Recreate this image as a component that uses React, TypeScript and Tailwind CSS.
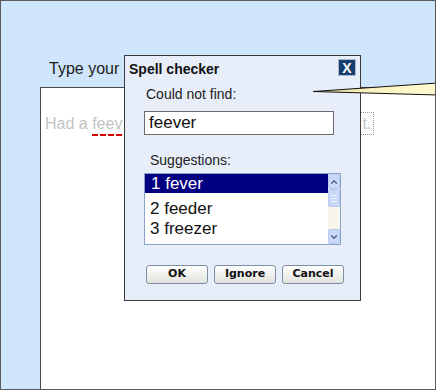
import { ChevronDown, ChevronUp } from 'lucide-react'

const sans = "font-['Liberation_Sans',Arial,sans-serif]"

export default function App() {
  return (
    <div className={`relative flex h-[390px] w-[436px] flex-col overflow-hidden border border-[#5a5a5a] bg-[#cee5fb] ${sans}`}>
      <div className="ml-[48px] mt-[58px] whitespace-nowrap text-[16px] leading-[20px] text-[#1c1c1c]">Type your</div>

      <div className="ml-[39px] mt-[8px] flex-1 border-l border-t border-[#4a4a4a] bg-white pl-[4px] pt-[24px]">
        <div className="flex items-center whitespace-nowrap text-[16px] leading-[20px] text-[#c2c2c2]">
          <span>
            Had a{' '}
            <span className="underline decoration-[#d40000] decoration-dashed decoration-[1.5px] underline-offset-[6px]">feev</span>
          </span>
          <span className="ml-[238px] inline-block h-[23px] border border-dotted border-[#9a9a9a] pl-[1px] pr-[2px] leading-[21px]">t.</span>
        </div>
      </div>

      <SpellDialog />

      <svg className="pointer-events-none absolute left-0 top-0" width="436" height="390">
        <defs>
          <linearGradient id="callout" x1="0" x2="1" y1="0" y2="0">
            <stop offset="0" stopColor="#d9cf8e" />
            <stop offset="0.45" stopColor="#fbf3bf" />
            <stop offset="1" stopColor="#fffad2" />
          </linearGradient>
        </defs>
        <polygon points="312,90.5 437,82 437,94" fill="url(#callout)" stroke="#111" strokeWidth="1" />
      </svg>
    </div>
  )
}

function SpellDialog() {
  return (
    <div className="absolute left-[123px] top-[54px] flex h-[246px] w-[237px] flex-col border border-[#3a3a3a] bg-[#e8eef9]">
      <div className="flex justify-between">
        <div className="ml-[4px] mt-[5px] text-[14px] font-bold leading-[17px] text-[#111]">Spell checker</div>
        <div className="mr-[4px] mt-[3px] flex h-[17px] w-[18px] items-center justify-center border border-[#a9bcd2] bg-[#173f6e] text-[14px] font-bold leading-none text-white">
          X
        </div>
      </div>

      <div className="ml-[21px] mt-[8px] text-[14px] leading-[16px] text-[#222]">Could not find:</div>

      <div className="ml-[19px] mt-[9px] h-[24px] w-[190px] border border-[#6b6b6b] bg-white pl-[4px] text-[17px] leading-[22px] text-[#111]">
        feever
      </div>

      <div className="ml-[25px] mt-[17px] text-[14px] leading-[16px] text-[#222]">Suggestions:</div>

      <div className="ml-[19px] mt-[5px] flex h-[72px] w-[197px] border border-[#8aa4c8] bg-white">
        <div className="flex-1 text-[17px] text-[#111]">
          <div className="h-[19px] bg-[#000080] pl-[6px] leading-[19px] text-white">1 fever</div>
          <div className="mt-[6px] h-[20px] pl-[5px] leading-[19px]">2 feeder</div>
          <div className="h-[20px] pl-[5px] leading-[19px]">3 freezer</div>
        </div>
        <Scrollbar />
      </div>

      <div className="ml-[21px] mt-[20px] flex gap-[6px]">
        {['OK', 'Ignore', 'Cancel'].map((b) => (
          <div
            key={b}
            className="flex h-[19px] w-[62px] items-center justify-center rounded-[3px] border border-[#7d8fa6] bg-gradient-to-b from-white to-[#e2e2dc] font-['DejaVu_Sans',Verdana,sans-serif] text-[11px] font-bold text-[#111]"
          >
            {b}
          </div>
        ))}
      </div>
    </div>
  )
}

function Scrollbar() {
  return (
    <div className="flex w-[12px] flex-col bg-[#f7f5ec]">
      <div className="flex h-[15px] items-center justify-center rounded-[2px] border border-[#b8cbee] bg-[#c9d9f7] text-[#4d6185]">
        <ChevronUp size={10} strokeWidth={3} />
      </div>
      <div className="flex h-[18px] flex-col items-center justify-center gap-[2px] rounded-[2px] border border-[#b8cbee] bg-[#c9d9f7]">
        <span className="h-px w-[6px] bg-[#eef3fd]" />
        <span className="h-px w-[6px] bg-[#eef3fd]" />
        <span className="h-px w-[6px] bg-[#eef3fd]" />
      </div>
      <div className="flex-1" />
      <div className="flex h-[15px] items-center justify-center rounded-[2px] border border-[#b8cbee] bg-[#c9d9f7] text-[#4d6185]">
        <ChevronDown size={10} strokeWidth={3} />
      </div>
    </div>
  )
}
